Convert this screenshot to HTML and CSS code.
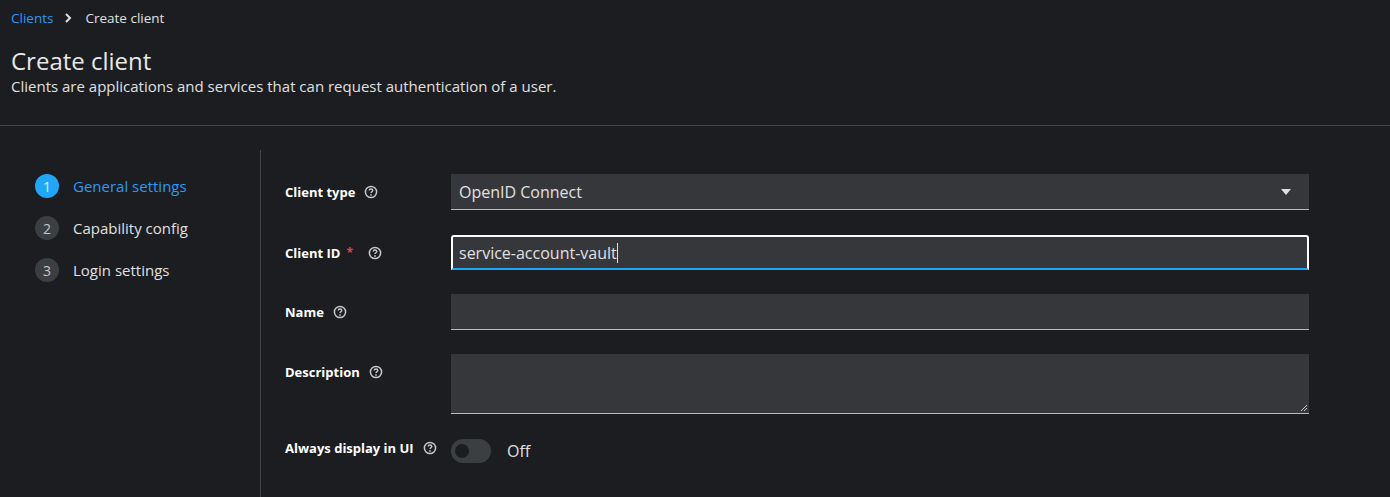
FILE: index.html
```html
<!DOCTYPE html>
<html lang="en">
<head>
<meta charset="utf-8">
<title>Create client</title>
<link rel="stylesheet" href="styles.css">
</head>
<body>
<header class="page-header">
  <nav class="breadcrumb">
    <a class="crumb-link" href="#">Clients</a>
    <svg class="crumb-sep" width="8" height="10" viewBox="0 0 8 10"><path d="M2 1 L6 5 L2 9" fill="none" stroke="#e0e0e0" stroke-width="2"/></svg>
    <span class="crumb-current">Create client</span>
  </nav>
  <h1 class="title">Create client</h1>
  <p class="subtitle">Clients are applications and services that can request authentication of a user.</p>
</header>
<main class="wizard">
  <aside class="steps">
    <div class="step active"><span class="step-num">1</span><span class="step-text">General settings</span></div>
    <div class="step"><span class="step-num">2</span><span class="step-text">Capability config</span></div>
    <div class="step"><span class="step-num">3</span><span class="step-text">Login settings</span></div>
  </aside>
  <section class="form">
    <div class="row first-row">
      <div class="label">Client type
        <svg class="help" viewBox="0 0 14 14"><circle cx="7" cy="7" r="5.6" fill="none" stroke="currentColor" stroke-width="1.5"/><path d="M5.2 5.6 C5.2 4.5 6 4 7 4 C8 4 8.8 4.6 8.8 5.5 C8.8 6.6 7 6.6 7 8" fill="none" stroke="currentColor" stroke-width="1.4"/><circle cx="7" cy="9.9" r="0.85" fill="currentColor"/></svg>
      </div>
      <div class="control select">
        <span>OpenID Connect</span>
        <svg class="caret" width="10" height="6" viewBox="0 0 10 6"><path d="M0 0 L10 0 L5 6 Z" fill="#e0e0e0"/></svg>
      </div>
    </div>
    <div class="row">
      <div class="label">Client ID <span class="req">*</span>
        <svg class="help" viewBox="0 0 14 14"><circle cx="7" cy="7" r="5.6" fill="none" stroke="currentColor" stroke-width="1.5"/><path d="M5.2 5.6 C5.2 4.5 6 4 7 4 C8 4 8.8 4.6 8.8 5.5 C8.8 6.6 7 6.6 7 8" fill="none" stroke="currentColor" stroke-width="1.4"/><circle cx="7" cy="9.9" r="0.85" fill="currentColor"/></svg>
      </div>
      <div class="control input focused"><span>service-account-vault</span><span class="cursor"></span></div>
    </div>
    <div class="row">
      <div class="label">Name
        <svg class="help" viewBox="0 0 14 14"><circle cx="7" cy="7" r="5.6" fill="none" stroke="currentColor" stroke-width="1.5"/><path d="M5.2 5.6 C5.2 4.5 6 4 7 4 C8 4 8.8 4.6 8.8 5.5 C8.8 6.6 7 6.6 7 8" fill="none" stroke="currentColor" stroke-width="1.4"/><circle cx="7" cy="9.9" r="0.85" fill="currentColor"/></svg>
      </div>
      <div class="control input"></div>
    </div>
    <div class="row">
      <div class="label">Description
        <svg class="help" viewBox="0 0 14 14"><circle cx="7" cy="7" r="5.6" fill="none" stroke="currentColor" stroke-width="1.5"/><path d="M5.2 5.6 C5.2 4.5 6 4 7 4 C8 4 8.8 4.6 8.8 5.5 C8.8 6.6 7 6.6 7 8" fill="none" stroke="currentColor" stroke-width="1.4"/><circle cx="7" cy="9.9" r="0.85" fill="currentColor"/></svg>
      </div>
      <div class="control textarea">
        <svg class="grip" width="8" height="8" viewBox="0 0 8 8"><path d="M7 1 L1 7 M7 4 L4 7" stroke="#c7c7c7" stroke-width="1"/></svg>
      </div>
    </div>
    <div class="row toggle-row">
      <div class="label">Always display in UI
        <svg class="help" viewBox="0 0 14 14"><circle cx="7" cy="7" r="5.6" fill="none" stroke="currentColor" stroke-width="1.5"/><path d="M5.2 5.6 C5.2 4.5 6 4 7 4 C8 4 8.8 4.6 8.8 5.5 C8.8 6.6 7 6.6 7 8" fill="none" stroke="currentColor" stroke-width="1.4"/><circle cx="7" cy="9.9" r="0.85" fill="currentColor"/></svg>
      </div>
      <div class="toggle-wrap">
        <span class="switch"><span class="knob"></span></span>
        <span class="toggle-text">Off</span>
      </div>
    </div>
  </section>
</main>
</body>
</html>
```

FILE: styles.css
```css
html, body {
  margin: 0;
  padding: 0;
  background: #1b1d21;
  color: #e0e0e0;
  font-family: "Open Sans", "Noto Sans", sans-serif;
  height: 100%;
  overflow: hidden;
}

.page-header {
  padding: 8px 11px 0;
  height: 117px;
  border-bottom: 1px solid #444548;
}

.breadcrumb {
  display: flex;
  align-items: center;
  height: 20px;
  font-size: 13.5px;
}

.crumb-link {
  color: #2b9af3;
  text-decoration: none;
}

.crumb-sep {
  margin: 0 13px 0 11px;
}

.crumb-current {
  color: #e0e0e0;
}

.title {
  margin: 18px 0 0;
  font-size: 24px;
  font-weight: 400;
  line-height: 30px;
  color: #e8e8e8;
}

.subtitle {
  margin: 0;
  font-size: 15px;
  line-height: 20px;
  color: #e0e0e0;
}

.wizard {
  display: flex;
  margin-top: 24px;
  height: 347px;
}

.steps {
  width: 261px;
  border-right: 1px solid #444548;
  padding: 24px 0 0 35px;
  box-sizing: border-box;
  flex: none;
}

.step {
  display: flex;
  align-items: center;
  height: 24px;
  margin: 0 0 18px;
  font-size: 15px;
}

.step-num {
  width: 24px;
  height: 24px;
  border-radius: 50%;
  background: #3c3f42;
  color: #c7c7c7;
  font-size: 14px;
  display: flex;
  align-items: center;
  justify-content: center;
  margin-right: 14px;
}

.step.active .step-num {
  background: #1fa7f8;
  color: #e0f0ff;
}

.step.active .step-text {
  color: #2b9af3;
}

.form {
  padding: 24px 0 0 24px;
  flex: 1;
}

.row {
  display: flex;
  margin-bottom: 24px;
}

.first-row {
  margin-bottom: 25px;
}

.label {
  width: 166px;
  flex: none;
  font-size: 13px;
  font-weight: 700;
  color: #ffffff;
  padding-top: 9px;
  line-height: 18px;
  display: flex;
  align-items: center;
  align-self: flex-start;
}

.req {
  color: #e1473d;
  margin: 0 6px 0 6px;
  font-size: 12px;
}

.help {
  width: 14px;
  height: 14px;
  color: #c7c7c7;
  margin-left: 9px;
}

.control {
  width: 858px;
  box-sizing: border-box;
  background: #36373b;
  border-bottom: 1px solid #b8bbbe;
  font-size: 16px;
  color: #e0e0e0;
}

.select {
  height: 36px;
  display: flex;
  align-items: center;
  justify-content: space-between;
  padding: 0 18px 0 8px;
}

.input {
  height: 36px;
}

.focused {
  border: 2px solid #ffffff;
  border-bottom: 2px solid #1fa7f8;
  border-radius: 3px 3px 0 0;
  display: flex;
  align-items: center;
  padding: 0 6px;
  height: 35px;
}

.cursor {
  display: inline-block;
  width: 1px;
  height: 20px;
  background: #e0e0e0;
}

.textarea {
  height: 60px;
  position: relative;
}

.grip {
  position: absolute;
  right: 1px;
  bottom: 1px;
}

.toggle-row .label {
  padding-top: 1px;
}

.toggle-wrap {
  display: flex;
  align-items: center;
  padding-top: 1px;
}

.switch {
  width: 40px;
  height: 24px;
  border-radius: 12px;
  background: #3c3f42;
  display: flex;
  align-items: center;
  padding-left: 4px;
  box-sizing: border-box;
}

.knob {
  width: 14px;
  height: 14px;
  border-radius: 50%;
  background: #1b1d21;
}

.toggle-text {
  margin-left: 16px;
  font-size: 16px;
  color: #e0e0e0;
}
```
